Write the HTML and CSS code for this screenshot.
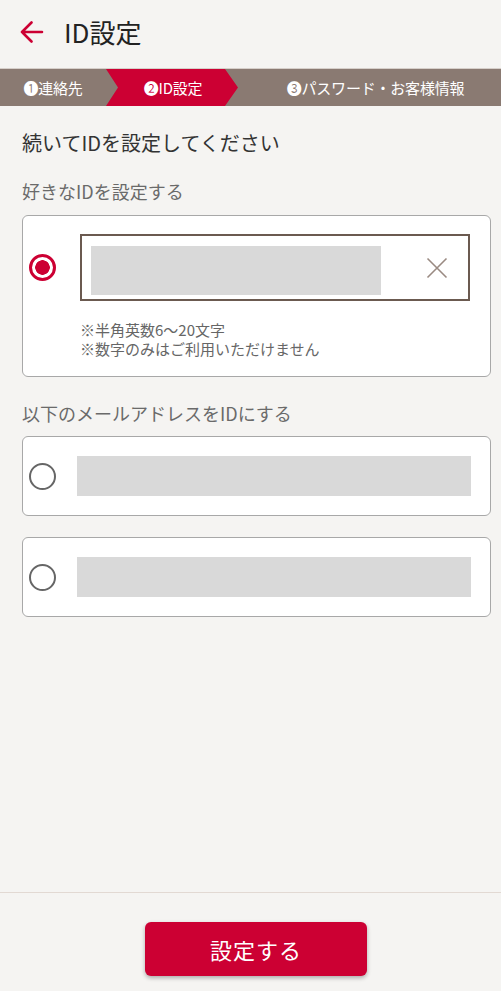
FILE: index.html
```html
<!DOCTYPE html>
<html lang="ja">
<head>
<meta charset="utf-8">
<link rel="stylesheet" href="styles.css">
</head>
<body>
<div class="page">
  <header class="header">
    <svg class="back" width="24" height="24" viewBox="0 0 24 24">
      <path d="M22 11 H2 M11.5 1.5 L2 11 L11.5 20.5" fill="none" stroke="#cc0033" stroke-width="2.6" stroke-linecap="round" stroke-linejoin="round"/>
    </svg>
    <h1 class="title">ID設定</h1>
  </header>
  <nav class="steps">
    <div class="step step-1">❶連絡先</div>
    <div class="step step-2">❷ID設定</div>
    <div class="step step-3">❸パスワード・お客様情報</div>
  </nav>
  <main class="content">
    <p class="lead">続いてIDを設定してください</p>
    <p class="label">好きなIDを設定する</p>
    <div class="card card-custom">
      <div class="row">
        <span class="radio radio-on"></span>
        <div class="input">
          <span class="ph ph-input"></span>
          <svg class="clear" width="22" height="22" viewBox="0 0 22 22">
            <path d="M1.5 1.5 L20.5 20.5 M20.5 1.5 L1.5 20.5" stroke="#9a8a82" stroke-width="1.6" fill="none"/>
          </svg>
        </div>
      </div>
      <div class="notes">
        <p>※半角英数6〜20文字</p>
        <p>※数字のみはご利用いただけません</p>
      </div>
    </div>
    <p class="label label-mail">以下のメールアドレスをIDにする</p>
    <div class="card card-mail">
      <span class="radio"></span>
      <span class="ph ph-mail"></span>
    </div>
    <div class="card card-mail">
      <span class="radio"></span>
      <span class="ph ph-mail"></span>
    </div>
  </main>
  <footer class="footer">
    <button class="submit">設定する</button>
  </footer>
</div>
</body>
</html>
```
FILE: styles.css
```css
* { box-sizing: border-box; }
html, body { margin: 0; padding: 0; }
body {
  background: #f5f4f2;
  font-family: "Noto Sans CJK JP", "Noto Sans", sans-serif;
  color: #333;
}
.page {
  width: 501px;
  height: 991px;
  display: flex;
  flex-direction: column;
}
.header {
  height: 68px;
  display: flex;
  align-items: center;
  padding-left: 20px;
  padding-bottom: 4px;
}
.back { display: block; margin-top: 2px; }
.title {
  margin: 0 0 0 20px;
  font-size: 26px;
  font-weight: 400;
  color: #222;
  line-height: 1;
}
.steps {
  height: 38px;
  background: #8a7a72;
  border-top: 1px solid #d6cfca;
  display: flex;
  align-items: stretch;
  color: #fff;
  font-size: 15px;
}
.step {
  display: flex;
  align-items: center;
  justify-content: center;
  white-space: nowrap;
  letter-spacing: -0.2px;
}
.step-1 { width: 106px; }
.step-2 {
  width: 132px;
  background: #cc0033;
  clip-path: polygon(0 0, 119px 0, 132px 50%, 119px 100%, 0 100%, 12px 50%);
  padding-left: 2px;
}
.step-3 { flex: 1; padding-left: 12px; }
.content {
  flex: 1;
  padding: 0 10px 0 22px;
}
.lead {
  margin: 23px 0 0;
  font-size: 20px;
  line-height: 28px;
  color: #333;
}
.label {
  margin: 21px 0 0;
  font-size: 18px;
  line-height: 26px;
  color: #6a6a6a;
}
.label-mail { margin-top: 23px; }
.card {
  background: #fff;
  border: 1.5px solid #a8a8a8;
  border-radius: 6px;
}
.card-custom {
  margin-top: 11px;
  height: 162px;
  padding: 18px 20px 0 6px;
}
.row {
  display: flex;
  align-items: center;
}
.radio {
  flex: none;
  width: 27px;
  height: 27px;
  border-radius: 50%;
  border: 2.5px solid #666;
  background: #fff;
}
.radio-on {
  border: 3px solid #cc0033;
  background: radial-gradient(circle, #cc0033 0 7px, #fff 7.5px);
}
.input {
  margin-left: 24px;
  flex: 1;
  height: 67px;
  border: 2px solid #6b5a50;
  display: flex;
  align-items: center;
  padding: 0 20px 0 9px;
  justify-content: space-between;
}
.ph {
  display: block;
  background: #d9d9d9;
}
.ph-input { width: 290px; height: 49px; margin-top: 6px; }
.clear { display: block; margin-top: 1px; }
.notes {
  margin: 19px 0 0 51px;
  font-size: 15px;
  line-height: 19px;
  color: #666;
}
.notes p { margin: 0; }
.card-mail {
  margin-top: 10px;
  height: 80px;
  display: flex;
  align-items: center;
  padding: 0 19px 0 6px;
}
.card-mail + .card-mail { margin-top: 21px; }
.card-mail .ph {
  margin-left: 21px;
  flex: 1;
  height: 40px;
}
.footer {
  height: 99px;
  border-top: 1.5px solid #e2d9d3;
  display: flex;
  justify-content: flex-start;
  padding: 29px 0 0 145px;
}
.submit {
  width: 222px;
  height: 54px;
  background: #cc0033;
  border: none;
  border-radius: 6px;
  color: #fff;
  font-family: "Noto Sans CJK JP", "Noto Sans", sans-serif;
  font-size: 22px;
  letter-spacing: 1px;
  box-shadow: 0 2px 4px rgba(0,0,0,0.3);
}
```
